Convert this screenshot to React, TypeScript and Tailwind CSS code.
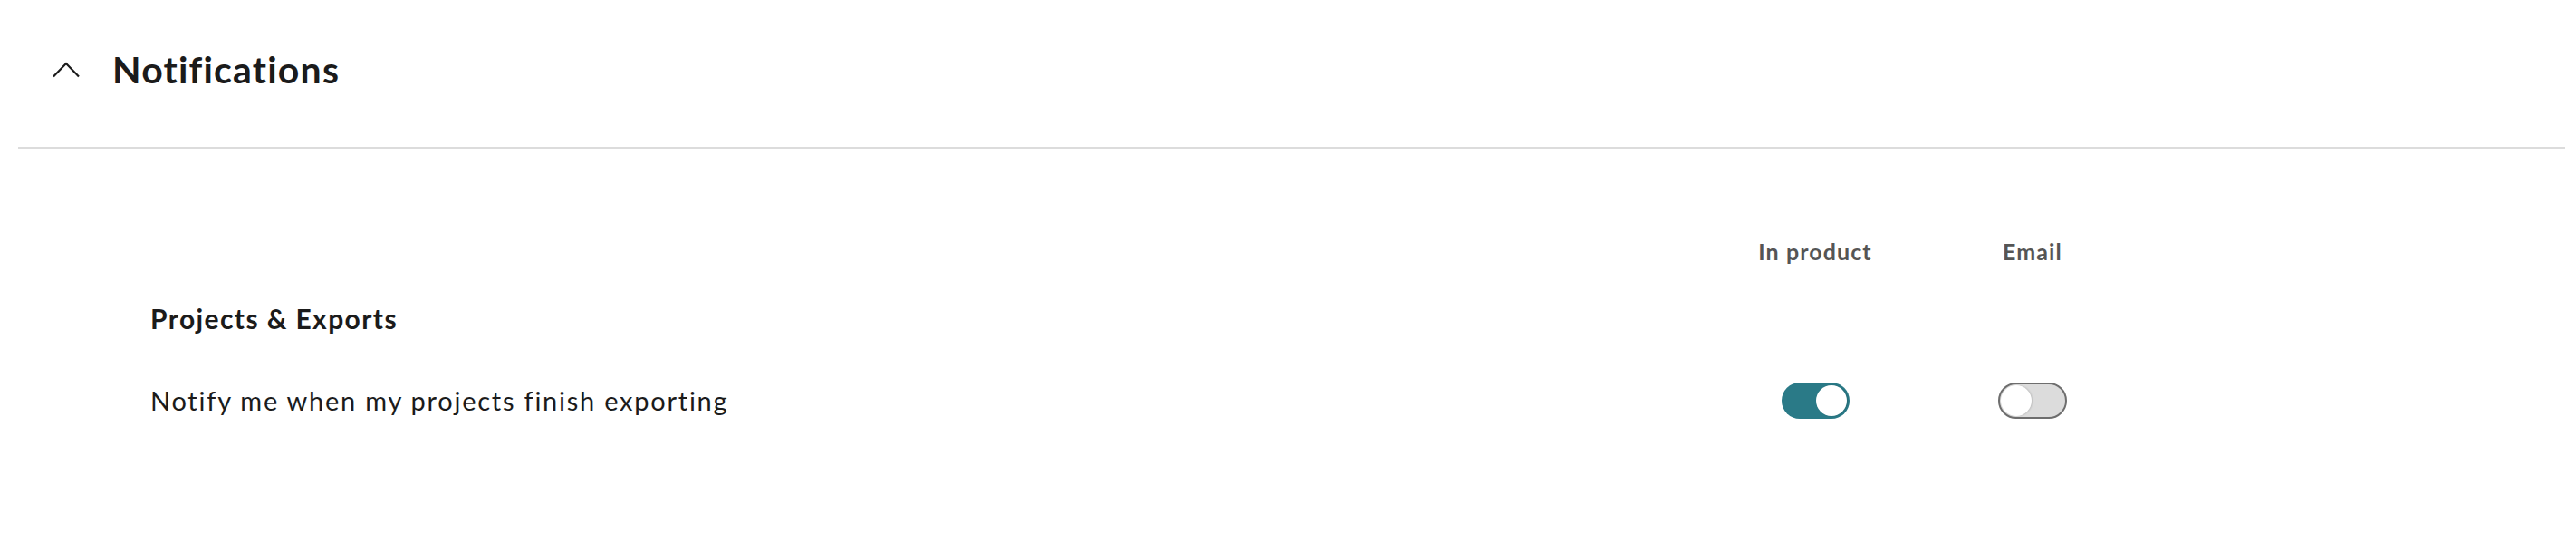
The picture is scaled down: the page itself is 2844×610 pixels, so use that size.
import { useState } from 'react';

function Toggle({ checked, onChange }: { checked: boolean; onChange: (v: boolean) => void }) {
  return (
    <button
      type="button"
      role="switch"
      aria-checked={checked}
      onClick={() => onChange(!checked)}
      className={
        checked
          ? 'flex items-center justify-end w-[75px] h-[40px] rounded-full bg-[#2a7a87] px-[3px]'
          : 'flex items-center justify-start w-[76px] h-[40px] rounded-full bg-[#dcdcdc] border-2 border-[#6e6e6e] px-[1px]'
      }
    >
      <span className="block w-[34px] h-[34px] rounded-full bg-white shadow-[1px_0_2px_rgba(0,0,0,0.15)]" />
    </button>
  );
}

export default function App() {
  const [open, setOpen] = useState(true);
  const [inProduct, setInProduct] = useState(true);
  const [email, setEmail] = useState(false);

  return (
    <main className="w-full h-[610px] bg-white font-['Lato','Noto_Sans',sans-serif] text-[#1b1b1b]">
      <div className="pl-[20px] pr-[12px]">
        {/* Section header */}
        <button
          type="button"
          onClick={() => setOpen(!open)}
          className="flex items-center w-full h-[164px] pb-[8px] pl-[38px] gap-[36px] border-b-2 border-[#dcdcdc] text-left"
        >
          <svg width="30" height="18" viewBox="0 0 30 18" fill="none" className="shrink-0">
            <polyline points="1,16.5 15,2 29,16.5" stroke="#1b1b1b" strokeWidth="2.2" />
          </svg>
          <span className="text-[41px] leading-[50px] font-bold tracking-[1.2px]">Notifications</span>
        </button>
      </div>

      {open && (
        <div className="pl-[166px] pr-[480px]">
          {/* Column headers */}
          <div className="flex mt-[98px] h-[30px]">
            <div className="flex-1" />
            <div className="w-[240px] text-center text-[25px] leading-[30px] font-bold tracking-[1.1px] text-[#555555]">In product</div>
            <div className="w-[240px] text-center text-[25px] leading-[30px] font-bold tracking-[1.1px] text-[#555555]">Email</div>
          </div>

          <h3 className="mt-[41px] text-[30px] leading-[36px] font-bold tracking-[1.4px]">Projects &amp; Exports</h3>

          <div className="flex items-center mt-[53px] h-[40px]">
            <div className="flex-1 text-[29px] leading-[40px] tracking-[1.75px]">Notify me when my projects finish exporting</div>
            <div className="w-[240px] flex justify-center">
              <Toggle checked={inProduct} onChange={setInProduct} />
            </div>
            <div className="w-[240px] flex justify-center">
              <Toggle checked={email} onChange={setEmail} />
            </div>
          </div>
        </div>
      )}
    </main>
  );
}
